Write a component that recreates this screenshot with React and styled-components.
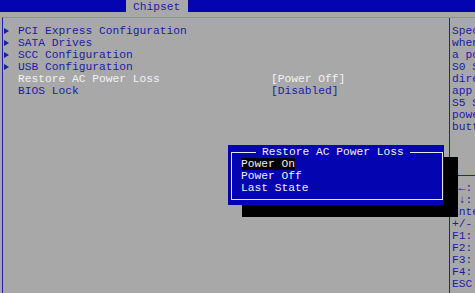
import React from 'react'
import styled, { createGlobalStyle } from 'styled-components';

const GlobalStyle = createGlobalStyle`
    html, body {
        margin: 0;
        padding: 0;
        width: 475px;
        height: 293px;
        overflow: hidden;
        background: #a8a8a8;
    }
    body {
        font-family: "Liberation Mono", "DejaVu Sans Mono", monospace;
        font-size: 11.25px;
        line-height: 12px;
    }
`

const Screen = styled.div`
    position: relative;
    width: 475px;
    height: 293px;
    display: grid;
    grid-template-rows: 12px 5px 1fr;
    background: #a8a8a8;
    overflow: hidden;
`

const TopBar = styled.div`
    background: #0404b0;
    display: flex;
    padding-left: 126px;
`

const Tab = styled.div`
    background: #a8a8a8;
    color: #1c1ca4;
    padding: 1px 7px 0;
    width: 48px;
`

const Frame = styled.div`
    margin-left: 2px;
    border-top: 1px solid #8c8cb8;
    border-left: 1px solid #2020b0;
    display: grid;
    grid-template-columns: 446px 1fr;
    min-height: 0;
`

const Main = styled.div`
    padding-top: 7px;
`

const Row = styled.div`
    display: grid;
    grid-template-columns: 14px 253px 1fr;
    height: 12px;
    padding-left: 1px;
    color: ${({ $active }) => ($active ? '#f2f2f2' : '#1c1ca4')};
    white-space: pre;
`

const Arrow = styled.span`
    width: 0;
    height: 0;
    margin-top: 3px;
    border-left: 5px solid #1c1ca4;
    border-top: 3px solid transparent;
    border-bottom: 3px solid transparent;
`

const Side = styled.div`
    border-left: 1px solid #2020b0;
    display: flex;
    flex-direction: column;
    color: #1c1ca4;
    white-space: pre;
    overflow: hidden;
`

const HelpText = styled.div`
    height: 150px;
    padding: 7px 0 0 2px;
    border-bottom: 1px solid #2020b0;
`

const KeyList = styled.div`
    padding: 6px 0 0 2px;
`

const Line = styled.div`
    height: 12px;
`

const Popup = styled.div`
    position: absolute;
    left: 228px;
    top: 145px;
    width: 216px;
    box-sizing: border-box;
    padding: 1px 1px 5px 3px;
    background: #0404b0;
    box-shadow: 14px 12px 0 #000;
    color: #f0f0f0;
`

const Box = styled.fieldset`
    margin: 0;
    padding: 0 0 5px 9px;
    border: 1px solid #e8e8f4;
    min-width: 0;
`

const Title = styled.legend`
    margin-left: 15px;
    padding: 0 6px;
    line-height: 12px;
`

const Option = styled.div`
    height: 12px;
`

const OptionText = styled.span`
    display: inline-block;
    height: 12px;
    background: ${({ $selected }) => ($selected ? '#000' : 'transparent')};
`

const items = [
    { label: 'PCI Express Configuration', sub: true },
    { label: 'SATA Drives', sub: true },
    { label: 'SCC Configuration', sub: true },
    { label: 'USB Configuration', sub: true },
    { label: 'Restore AC Power Loss', value: '[Power Off]', active: true },
    { label: 'BIOS Lock', value: '[Disabled]' },
]

const help = [
    'Specify what state to go to',
    'when power is re-applied after',
    'a power failure (G3 state).',
    'S0 State - system powers on',
    'directly when power is re-',
    'app. Last State - returns to',
    'S5 State - system stays off',
    'power is restored until the',
    'button is pressed.',
]

const keys = [
    '\u2192\u2190: Select Screen',
    '\u2191\u2193: Select Item',
    'Enter: Select',
    '+/-: Change Opt.',
    'F1: General Help',
    'F2: Previous Values',
    'F3: Optimized Defaults',
    'F4: Save & Exit',
    'ESC: Exit',
]

const App = () => {
    return (
        <>
            <GlobalStyle />
            <Screen>
                <TopBar>
                    <Tab>Chipset</Tab>
                </TopBar>
                <div />
                <Frame>
                    <Main>
                        {items.map((it) => (
                            <Row key={it.label} $active={it.active}>
                                {it.sub ? <Arrow /> : <span />}
                                <span>{it.label}</span>
                                <span>{it.value || ''}</span>
                            </Row>
                        ))}
                    </Main>
                    <Side>
                        <HelpText>
                            {help.map((h) => <Line key={h}>{h}</Line>)}
                        </HelpText>
                        <KeyList>
                            {keys.map((k) => <Line key={k}>{k}</Line>)}
                        </KeyList>
                    </Side>
                </Frame>
                <Popup>
                    <Box>
                        <Title>Restore AC Power Loss</Title>
                        <Option><OptionText $selected>Power On</OptionText></Option>
                        <Option><OptionText>Power Off</OptionText></Option>
                        <Option><OptionText>Last State</OptionText></Option>
                    </Box>
                </Popup>
            </Screen>
        </>
    )
}

export default App;
